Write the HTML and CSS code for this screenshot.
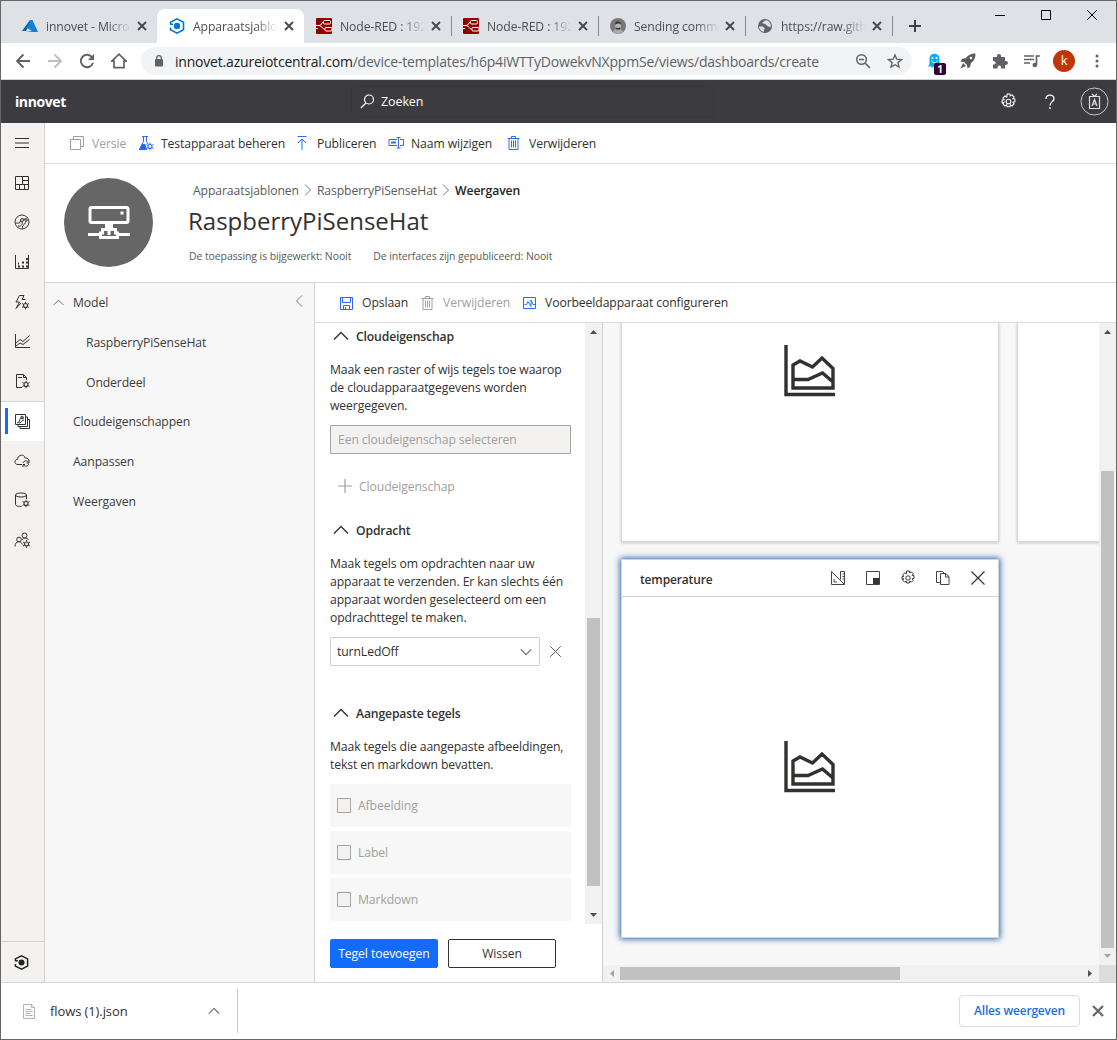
FILE: index.html
```html
<!DOCTYPE html>
<html lang="nl">
<head>
<meta charset="utf-8">
<title>Apparaatsjablonen</title>
<link rel="stylesheet" href="styles.css">
</head>
<body>
<svg class="defs" width="0" height="0">
  <symbol id="close" viewBox="0 0 16 16"><path d="M4 4l8 8M12 4l-8 8" stroke="currentColor" stroke-width="1.9" fill="none"/></symbol>
  <symbol id="thin-x" viewBox="0 0 16 16"><path d="M1.5 1.5l13 13M14.500 1.500l-13 13" stroke="currentColor" stroke-width="1.200" fill="none"/></symbol>
  <symbol id="up" viewBox="0 0 16 16"><path d="M1 11.500l7-7 7 7" stroke="currentColor" stroke-width="1.400" fill="none"/></symbol>
  <symbol id="gear" viewBox="0 0 16 16"><g fill="none" stroke="currentColor"><circle cx="8" cy="8" r="2.200"/><path d="M6.700 1h2.600l.4 1.800 1.600-1 1.900 1.900-1 1.600 1.800.4v2.600l-1.800.4 1 1.600-1.900 1.900-1.600-1-.4 1.800H6.700l-.4-1.800-1.600 1-1.900-1.900 1-1.600L2 9.300V6.700l1.800-.4-1-1.600 1.900-1.900 1.600 1z"/></g></symbol>
  <symbol id="hub" viewBox="0 0 16 16"><path d="M1.500 6V4.200L8 .9l6.500 3.300v7.600L8 15.100l-6.500-3.300V9.500M1 6.200h3" fill="none" stroke="currentColor" stroke-width="1.600"/><circle cx="8" cy="8" r="3.200" fill="currentColor"/></symbol>
  <symbol id="nodered" viewBox="0 0 16 16"><rect width="16" height="16" rx="1" fill="#8f0000"/><g fill="none" stroke="#fff"><rect x="7.500" y="2.500" width="7" height="3.500" rx="1"/><rect x="9" y="9.500" width="7" height="3.500" rx="1"/><path d="M0 7.500h3c3 0 2-3.200 4.500-3.200M3 7.500c3 0 3 3.800 6 3.800M0 10.500h2"/></g></symbol>
  <symbol id="trash" viewBox="0 0 16 16"><path d="M1.500 3.500h12M5.500 3V1.500h4V3M3 3.500v11h9v-11M5.500 5.500v7M7.500 5.500v7M9.500 5.500v7" fill="none" stroke="currentColor"/></symbol>
  <symbol id="chart" viewBox="0 0 52 52"><path d="M2 0v49.500h49M9 20v23h40V23.500L38 13l-9.500 9L16 16zM9 34.500h15L38.500 28l10.500 9" fill="none" stroke="currentColor" stroke-width="3.400"/></symbol>
  <symbol id="sgear" viewBox="0 0 8 8"><circle cx="4" cy="4" r="2" fill="none" stroke="currentColor" stroke-width="1.100"/><path d="M4 0v1.500M4 6.500V8M.5 2l1.400.8M6.100 5.200l1.400.8M.5 6l1.400-.8M6.100 2.800L7.500 2" stroke="currentColor"/></symbol>
</svg>
<div class="window">
  <div class="tabs">
    <div class="tab"><svg class="fav" viewBox="0 0 16 16"><path d="M8 2L0 13h4L9 3z" fill="#0a5ea8"/><path d="M8.500 2L5 10l5 3-6 1h12L10.500 2z" fill="#1480d8"/></svg><span class="title">innovet - Microsoft</span><svg class="x"><use href="#close"/></svg></div>
    <div class="tab active"><svg class="fav blue"><use href="#hub"/></svg><span class="title">Apparaatsjablonen</span><svg class="x"><use href="#close"/></svg></div>
    <div class="tab"><svg class="fav"><use href="#nodered"/></svg><span class="title">Node-RED : 192.168</span><svg class="x"><use href="#close"/></svg></div>
    <div class="tab sep"><svg class="fav"><use href="#nodered"/></svg><span class="title">Node-RED : 192.168</span><svg class="x"><use href="#close"/></svg></div>
    <div class="tab sep"><svg class="fav" viewBox="0 0 16 16"><circle cx="8" cy="8" r="8" fill="#777"/><path d="M3 14c0-4 10-4 10 0a8 8 0 0 1-10 0z" fill="#aaa"/><ellipse cx="8" cy="7.500" rx="3" ry="4" fill="#b5b5b5"/><path d="M5 7c-.5-5 6.500-5 6 0-1-2-4-2-6 0zM5.500 9c1 1.500 4 1.500 5 0l-.8 2.500H6.300z" fill="#333"/></svg><span class="title">Sending commands</span><svg class="x"><use href="#close"/></svg></div>
    <div class="tab sep"><svg class="fav" viewBox="0 0 16 16"><circle cx="8" cy="8" r="7" fill="#5f6368"/><path d="M2 8.500h4l2 2-1 1v2.200C4 13.500 2 11 2 8.500zM8 2.500c-1 1.500-3 1-2.500 3 2-.5 4 1 5.500 3 1 .5 2 .2 3 0C14 5 12 2.500 9 2.200z" fill="#dee1e6"/></svg><span class="title">https://raw.githubuser</span><svg class="x"><use href="#close"/></svg></div>
    <div class="newtab"><svg width="14" height="14" viewBox="0 0 14 14"><path d="M7 1v12M1 7h12" stroke="#3c4043" stroke-width="2"/></svg></div>
    <div class="controls">
      <svg width="12" height="12" viewBox="0 0 12 12"><path d="M1 6.500h10" stroke="#000"/></svg>
      <svg width="12" height="12" viewBox="0 0 12 12"><path d="M1.500 1.500h9v9h-9z" stroke="#000" fill="none"/></svg>
      <svg width="12" height="12" viewBox="0 0 12 12"><path d="M1 1l10 10M11 1L1 11" stroke="#000"/></svg>
    </div>
  </div>

  <div class="toolbar">
    <svg class="tb" viewBox="0 0 16 16"><path d="M15 8H2M8.500 1.500L2 8l6.500 6.500" stroke="#5f6368" stroke-width="1.900" fill="none"/></svg>
    <svg class="tb" viewBox="0 0 16 16"><path d="M1 8h13M7.500 1.500L14 8l-6.500 6.500" stroke="#bcbec1" stroke-width="1.900" fill="none"/></svg>
    <svg class="tb" viewBox="0 0 16 16"><path d="M13.200 4.500A6.200 6.200 0 1 0 14 9.800" stroke="#5f6368" stroke-width="1.900" fill="none"/><path d="M15 1v6H9z" fill="#5f6368"/></svg>
    <svg class="tb" viewBox="0 0 16 16"><path d="M.8 8.200L8 1.200l7.200 7H13v6.500H3V8.200z" stroke="#5f6368" stroke-width="1.700" fill="none"/></svg>
    <div class="omnibox">
      <svg class="lock" width="10" height="12" viewBox="0 0 10 12"><rect x="1" y="4" width="8" height="7.500" rx="1" fill="#5f6368"/><path d="M2.700 5V3a2.300 2.300 0 0 1 4.600 0v2" stroke="#5f6368" stroke-width="1.300" fill="none"/></svg>
      <div class="url"><span class="host">innovet.azureiotcentral.com</span>/device-templates/h6p4iWTTyDowekvNXppmSe/views/dashboards/create</div>
      <svg width="16" height="16" viewBox="0 0 16 16"><path d="M10 10l5 5M4 6.500h5" stroke="#5f6368" stroke-width="1.600"/><circle cx="6.500" cy="6.500" r="4.800" fill="none" stroke="#5f6368" stroke-width="1.500"/></svg>
      <svg width="16" height="16" viewBox="0 0 16 16"><path d="M8 2l1.800 4.200 4.600.4-3.500 3 1.100 4.500L8 11.700l-4 2.400 1.100-4.500-3.500-3 4.600-.4z" fill="none" stroke="#5f6368" stroke-width="1.400"/></svg>
    </div>
    <div class="ext ghost"><svg width="16" height="16" viewBox="0 0 16 16"><path d="M2 14l1.500-3V6c0-7 10-7 10 0v5l1 3-3-1-1.500 2-2-2-2 2-1-2z" fill="#00aef0"/><circle cx="6.500" cy="5" r="1.100" fill="#fff"/><circle cx="10.500" cy="5" r="1.100" fill="#fff"/><path d="M5.500 7.500c1 3 5 3 6 0" stroke="#fff" fill="none"/></svg><b>1</b></div>
    <svg class="ext" viewBox="0 0 16 16"><path d="M15.500.5C11 .5 8 2 6 5L2 6 .5 8.500 4 9l3 3 .5 3.500L10 14l1-4c3-2 4.500-5 4.500-9.500zM3 10L.5 15.500 6 13z" fill="#5a5a5a"/><circle cx="11" cy="5" r="1.300" fill="#fff"/></svg>
    <svg class="ext" viewBox="0 0 16 16"><path d="M1 4h4c-1-4 5-4 4 0h4v4c4-1 4 4.500 0 4v3.500H9c1-4-4-4-3.500 0H1v-4c3.500.5 3.500-4 0-3.500z" fill="#5f6368"/></svg>
    <svg class="ext" viewBox="0 0 16 16"><path d="M0 3h10M0 6.500h10M0 10h6M12.500 12V3H16" stroke="#5f6368" stroke-width="1.700" fill="none"/><circle cx="10.800" cy="12" r="2.300" fill="#5f6368"/></svg>
    <div class="avatar">k</div>
    <svg class="ext" viewBox="0 0 16 16"><g fill="#5f6368"><circle cx="8" cy="3" r="1.500"/><circle cx="8" cy="8" r="1.500"/><circle cx="8" cy="13" r="1.500"/></g></svg>
  </div>

  <header class="appbar">
    <div class="brand">innovet</div>
    <div class="search"><svg width="15" height="15" viewBox="0 0 15 15"><circle cx="9" cy="5.500" r="4.500" fill="none" stroke="#fff" stroke-width="1.200"/><path d="M6 9L.8 14" stroke="#fff" stroke-width="1.200"/></svg>Zoeken</div>
    <svg class="agear" width="17" height="17"><use href="#gear"/></svg>
    <svg class="help" width="12" height="16" viewBox="0 0 12 16"><path d="M2 5c0-5 8-5 8-.5C10 8 6 7.500 6 11.500M6 13v2" fill="none" stroke="#fff" stroke-width="1.300"/></svg>
    <svg width="29" height="29" viewBox="0 0 29 29"><circle cx="14.500" cy="14.500" r="13.500" fill="none" stroke="#c8c8c8"/><path d="M9.500 9.500h10v12h-10zM12 7l2.500 2.500L17 7M12 19l2.500-6.500L17 19M13 17h3" fill="none" stroke="#e0e0e0" stroke-width="1.200"/></svg>
  </header>

  <div class="app">
    <nav class="rail">
      <div class="ri"><svg viewBox="0 0 16 16"><path d="M1 3.500h14M1 8h14M1 12.500h14"/></svg></div>
      <div class="ri"><svg viewBox="0 0 16 16"><path d="M1.500 1.500h13v13h-13zM8.500 1.500v8M1.500 9.500h13M5.500 9.500v5M8.500 5.500h6M10.500 9.500v5"/></svg></div>
      <div class="ri"><svg viewBox="0 0 16 16"><circle cx="8" cy="8" r="7"/><circle cx="8" cy="6" r="1.500"/><circle cx="12" cy="6" r="1.200"/><path d="M1.500 9c4 0 4 1 4-1l1.500-1M8.500 14.500C8 10 11 12 11.500 7.500M9.500 5h2M4 12c3 1 5-2 4-4"/></svg></div>
      <div class="ri"><svg viewBox="0 0 16 16"><path d="M1.500 1v13.500h13V1"/><path d="M4 12.500h2M8 12.500h2M12 12.500h2M8 8.500h2M12 8.500h2M4 9.500h1M12 5h2" stroke-width="1.800"/></svg></div>
      <div class="ri"><svg viewBox="0 0 16 16"><path d="M10 1.500H5.500L2 8h3.500L2 14.500 7 9M10 1.500L8 5.500h3.500"/><use href="#sgear" x="7.500" y="7.500" width="8" height="8"/></svg></div>
      <div class="ri"><svg viewBox="0 0 16 16"><path d="M1.500 1v13.500H16M2 10l4-3.500 3 2 6.500-6M2 13l4-3 3 1.500 6.500-5"/></svg></div>
      <div class="ri"><svg viewBox="0 0 16 16"><path d="M8 14.500H2.500v-13h7l3 3V7M9.500 1.500v3h3M4 4.500h4" /><use href="#sgear" x="8" y="7.500" width="8" height="8"/></svg></div>
      <div class="ri sel"><svg viewBox="0 0 16 16"><path d="M1.500 1.500h10v10h-10zM4 12v1.500h9.500V4H12M6 14v1.500h9.500V6.500H14M3 10c3 0 2-4 4-5h3M5 10c3 0 2-3 5-3" /><circle cx="8" cy="4.500" r="1.300"/></svg></div>
      <div class="ri"><svg viewBox="0 0 16 16"><path d="M8 12.500H4C0 12.500 0 7.500 3.500 7.500 4 2 10.500 2 11 6c2.500-.5 4 1.500 4 3"/><path d="M9 11c.5-2.500 4.500-3 5.500-.5M15 8.500v2.500h-2.500M14.800 12c-.5 2.500-4.300 3-5.500.5M9 15v-2.500h2"/></svg></div>
      <div class="ri"><svg viewBox="0 0 16 16"><ellipse cx="7" cy="3" rx="5.500" ry="2"/><path d="M1.500 3v9.500c0 1.500 3 2 6 2M12.500 3v4"/><use href="#sgear" x="8" y="7.500" width="8" height="8"/></svg></div>
      <div class="ri"><svg viewBox="0 0 16 16"><circle cx="10.500" cy="3.500" r="2.500"/><circle cx="5" cy="7.500" r="2.300"/><path d="M1 14.500c0-6 6-6 7.500-2M8 8c2-3 5.500-2 6.500 0"/><use href="#sgear" x="8.500" y="8" width="8" height="8"/></svg></div>
      <div class="ri last"><svg class="hubicon"><use href="#hub"/></svg></div>
    </nav>

    <main class="main">
      <div class="cmds">
        <div class="cmd off w1"><svg viewBox="0 0 16 16"><path d="M1.500 4.500h10v10h-10zM4.500 4V1.500h10v10H12"/></svg>Versie</div>
        <div class="cmd w2"><svg viewBox="0 0 16 16"><path d="M4 1.500h6M5.500 1.500v5L1.500 14.500h7M8.500 1.500v5L10 9"/><path d="M4 9.500L1.500 14.500h7L7 9.500z" fill="#136bfb"/><use href="#sgear" x="8" y="7.500" width="8" height="8"/></svg>Testapparaat beheren</div>
        <div class="cmd w3"><svg viewBox="0 0 16 16"><path d="M3.500 1.500h9M8 15V4M4 8l4-4 4 4"/></svg>Publiceren</div>
        <div class="cmd w4"><svg viewBox="0 0 16 16"><path d="M9 4.500H1v6h8M12 4.500h3.500v6H12M3 7.500h5M8.500 2.500h4M10.500 2.500v10.500M8.500 13h4"/><path d="M3 7.500h5" stroke-width="2"/></svg>Naam wijzigen</div>
        <div class="cmd"><svg><use href="#trash"/></svg>Verwijderen</div>
      </div>

      <div class="hero">
        <div class="circle"><svg width="42" height="36" viewBox="0 0 42 36"><g fill="none" stroke="#fff" stroke-width="3"><rect x="2" y="2.500" width="38" height="15" rx="1.500"/><path d="M0 29.500h12M30 29.500h12"/><path d="M18.500 19v5.500h-4v3.500h-2v4.500h17V28h-2v-3.500h-4V19M21 19v11"/></g><rect x="32.500" y="6.500" width="3" height="3" fill="#fff"/></svg></div>
        <div class="heroText">
          <div class="crumbs"><span>Apparaatsjablonen</span><svg viewBox="0 0 8 12"><path d="M1 .5L6.500 6 1 11.500"/></svg><span class="c2">RaspberryPiSenseHat</span><svg viewBox="0 0 8 12"><path d="M1 .5L6.500 6 1 11.500"/></svg><b>Weergaven</b></div>
          <h1>RaspberryPiSenseHat</h1>
          <div class="meta"><span>De toepassing is bijgewerkt: Nooit</span><span>De interfaces zijn gepubliceerd: Nooit</span></div>
        </div>
      </div>

      <div class="work">
        <aside class="tree">
          <div class="ti root"><svg width="11" height="11"><use href="#up"/></svg><span>Model</span><svg class="collapse" width="8" height="12" viewBox="0 0 8 12"><path d="M7 .5L1.500 6 7 11.500" fill="none" stroke="#777"/></svg></div>
          <div class="ti sub">RaspberryPiSenseHat</div>
          <div class="ti sub">Onderdeel</div>
          <div class="ti">Cloudeigenschappen</div>
          <div class="ti">Aanpassen</div>
          <div class="ti">Weergaven</div>
        </aside>
        <section class="editor">
          <div class="cmds small">
            <div class="cmd w5"><svg viewBox="0 0 16 16"><path d="M1.500 2.500h12v12h-12zM3.500 2.500v5h8v-5M4.500 14.500v-4h6v4M6.500 12v2"/></svg>Opslaan</div>
            <div class="cmd off w6"><svg><use href="#trash"/></svg>Verwijderen</div>
            <div class="cmd w7"><svg viewBox="0 0 16 16"><path d="M1.500 2.500h12v11h-12zM2.500 9.500h2l1.500-3 3 5V5l2 4.500h2"/></svg>Voorbeeldapparaat configureren</div>
          </div>
          <div class="split">
            <div class="panel">
              <div class="scroll">
                <div class="form">
                  <h2><svg><use href="#up"/></svg>Cloudeigenschap</h2>
                  <p>Maak een raster of wijs tegels toe waarop<br>de cloudapparaatgegevens worden<br>weergegeven.</p>
                  <div class="input">Een cloudeigenschap selecteren</div>
                  <div class="add"><svg width="14" height="14" viewBox="0 0 14 14"><path d="M7 0v14M0 7h14" stroke="#a19f9d" stroke-width="1.200"/></svg>Cloudeigenschap</div>
                  <h2 class="h2b"><svg><use href="#up"/></svg>Opdracht</h2>
                  <p>Maak tegels om opdrachten naar uw<br>apparaat te verzenden. Er kan slechts één<br>apparaat worden geselecteerd om een<br>opdrachttegel te maken.</p>
                  <div class="selrow"><div class="select">turnLedOff<svg width="12" height="12"><use href="#up"/></svg></div><svg class="clear" width="13" height="13"><use href="#thin-x"/></svg></div>
                  <h2 class="h2c"><svg><use href="#up"/></svg>Aangepaste tegels</h2>
                  <p>Maak tegels die aangepaste afbeeldingen,<br>tekst en markdown bevatten.</p>
                  <div class="checks">
                    <div class="check"><i></i>Afbeelding</div>
                    <div class="check"><i></i>Label</div>
                    <div class="check"><i></i>Markdown</div>
                  </div>
                </div>
                <div class="vbar left"><svg viewBox="0 0 7 4"><path d="M0 4h7L3.500 0z"/></svg><div class="thumb"></div><svg viewBox="0 0 7 4"><path d="M0 0h7L3.500 4z"/></svg></div>
              </div>
              <div class="buttons"><div class="btn primary">Tegel toevoegen</div><div class="btn">Wissen</div></div>
            </div>
            <div class="canvasArea">
              <div class="canvas">
                <div class="tile"><div class="th"></div><div class="tbody"><svg><use href="#chart"/></svg></div></div>
                <div class="tile"></div>
                <div class="tile glow"><div class="th"><b>temperature</b>
                  <svg viewBox="0 0 16 16"><path d="M1.500 1.500v13h13zM4 9v3h3M10.500 1.500h4v13M10.500 1.500v8M12.500 4h2M12.500 6.500h2M12.500 9h2"/></svg>
                  <svg viewBox="0 0 16 16"><path d="M1.500 1.500h13v13h-13z"/><path d="M8 8h6v6H8z" fill="#333" stroke="none"/></svg>
                  <svg><use href="#gear"/></svg>
                  <svg viewBox="0 0 16 16"><path d="M5 12.500H1.500v-11h6L10 4M5.500 3.500h5l3.500 3v8H5.500zM10.500 3.500v3.500H14"/></svg>
                  <svg><use href="#thin-x"/></svg></div>
                  <div class="tbody"><svg><use href="#chart"/></svg></div></div>
              </div>
              <div class="vbar right"><svg viewBox="0 0 7 4"><path d="M0 4h7L3.500 0z"/></svg><div class="thumb"></div><svg class="dim" viewBox="0 0 7 4"><path d="M0 0h7L3.500 4z"/></svg></div>
              <div class="hbar"><svg class="dim" viewBox="0 0 4 7"><path d="M4 0v7L0 3.500z"/></svg><div class="thumb"></div><svg viewBox="0 0 4 7"><path d="M0 0v7l4-3.500z"/></svg></div>
              <div class="corner"></div>
            </div>
          </div>
        </section>
      </div>
    </main>
  </div>

  <footer class="downloads">
    <div class="file"><svg width="12" height="15" viewBox="0 0 12 15"><path d="M.5.500h8l3 3v11H.5zM8.500.5v3h3M2.500 5.500h6M2.500 7.500h7M2.500 9.500h5M2.500 11.500h7" fill="#fafafa" stroke="#b4b4b4"/></svg><span>flows (1).json</span><svg width="12" height="12"><use class="thick" href="#up"/></svg></div>
    <div class="all">Alles weergeven</div>
    <svg class="dx" width="20" height="20"><use href="#close"/></svg>
  </footer>
</div>
</body>
</html>
```
FILE: styles.css
```css
* { box-sizing: border-box; }
body { margin: 0; font-family: "Open Sans", "Noto Sans", sans-serif; font-size: 12.2px; color: #323130; letter-spacing: -0.1px; }
svg { flex: none; display: block; }
.defs { position: absolute; }
.window { width: 1117px; height: 1040px; border: 1px solid #666; display: flex; flex-direction: column; background: #fff; overflow: hidden; white-space: nowrap; }

/* browser tabs */
.tabs { height: 42px; flex: none; background: #dee1e6; display: flex; padding: 8px 0 0 9px; }
.tab { width: 147px; height: 34px; display: flex; align-items: center; padding-left: 12px; color: #4b4e52; flex: none; }
.tab.active { background: #fff; border-radius: 8px 8px 0 0; }
.tab.sep { background: linear-gradient(#85888d, #85888d) left center / 1px 20px no-repeat; }
.fav { width: 16px; height: 16px; margin-right: 8px; }
.blue { color: #0078d4; }
.title { width: 85px; overflow: hidden; mask-image: linear-gradient(90deg, #000 72%, transparent); }
.x { width: 16px; height: 16px; margin-left: 3px; color: #45484c; }
.newtab { width: 46px; border-left: 0; display: flex; align-items: center; padding-left: 16px; background: linear-gradient(#85888d, #85888d) left center / 1px 20px no-repeat; }
.controls { display: flex; gap: 34px; padding: 0 0 0 56px; }

/* browser toolbar */
.toolbar { height: 37px; flex: none; border-bottom: 1px solid #d0d2d4; display: flex; align-items: center; padding-left: 14px; }
.tb { width: 16px; height: 16px; margin-right: 16px; }
.omnibox { width: 771px; height: 28px; margin-left: -2px; border-radius: 14px; background: #f1f3f4; display: flex; align-items: center; padding-left: 13px; gap: 16px; }
.lock { margin-right: -5px; }
.url { width: 664px; font-size: 14px; color: #5f6368; letter-spacing: -0.2px; }
.host { color: #202124; }
.ext { width: 16px; height: 16px; margin-left: 16px; }
.ghost { display: flex; margin-left: 14px; width: 18px; position: relative; }
.ghost b { position: absolute; left: 8px; top: 10px; width: 12px; height: 12px; border-radius: 2px; background: #33003c; color: #fff; font-size: 10px; line-height: 12px; text-align: center; }
.avatar { width: 22px; height: 22px; margin: 0 8px 0 13px; border-radius: 50%; background: #c1350b; color: #fff; text-align: center; line-height: 21px; font-size: 13px; }
.avatar + .ext { margin-left: 6px; }

/* application bar */
.appbar { height: 43px; flex: none; background: #3c3b40; color: #fff; display: flex; align-items: center; padding-left: 14px; }
.brand { width: 337px; font-size: 14px; font-weight: 700; letter-spacing: -0.4px; }
.search { width: 361px; height: 29px; display: flex; align-items: center; gap: 6px; padding-left: 8px; border-radius: 3px; font-size: 12.500px; box-shadow: 0 0 2px rgba(0,0,0,.2); }
.agear { margin-left: 287px; }
.help { margin: 0 24px 0 27px; }

.app { flex: 1; min-height: 0; display: flex; }
.rail { width: 44px; background: #f3f2f1; border-right: 1px solid #d2d0ce; display: flex; flex-direction: column; }
.ri { height: 39.700px; display: flex; align-items: center; padding-left: 13px; flex: none; }
.ri svg { width: 16px; height: 16px; fill: none; stroke: #323130; }
.ri .hubicon { stroke: none; width: 15px; height: 15px; color: #222; }
.ri.sel { background: #fff; border-top: 1px solid #d8d6d4; padding-left: 4px; }
.ri.sel::before { content: ""; width: 3px; height: 26px; background: #136bfb; margin-right: 6px; }
.ri.last { margin-top: auto; height: 41px; border-top: 1px solid #d2d0ce; }
.main { flex: 1; min-width: 0; display: flex; flex-direction: column; }
.cmds { height: 41px; flex: none; border-bottom: 1px solid #dcdcdc; display: flex; align-items: center; padding-left: 24px; }
.cmd { display: flex; align-items: center; gap: 7px; }
.cmd svg { width: 16px; height: 16px; fill: none; stroke: #2a6af5; color: #2a6af5; }
.cmd.off { color: #a19f9d; }
.cmd.off svg { stroke: #a19f9d; color: #a19f9d; }
.w1 { width: 69px; }
.w2 { width: 156px; }
.w3 { width: 94px; }
.w4 { width: 118px; }

.hero { height: 119px; flex: none; border-bottom: 1px solid #d6d6d6; display: flex; padding-left: 19px; }
.circle { width: 89px; height: 89px; margin-top: 14px; border-radius: 50%; background: #666; display: flex; align-items: center; justify-content: center; }
.heroText { padding: 16px 0 0 36px; }
.crumbs { height: 20px; display: flex; align-items: center; padding-left: 4px; color: #5c5a58; }
.crumbs svg { width: 8px; height: 12px; margin: 0 5px; fill: none; stroke: #777; }
.crumbs b { font-weight: 600; color: #252423; }
h1 { margin: 4px 0 0 -1px; font-size: 24px; line-height: 34px; font-weight: 400; letter-spacing: 0; }
.meta { display: flex; gap: 22px; margin-top: 9px; font-size: 10.500px; line-height: 18px; color: #5c5a58; }

.work { flex: 1; min-height: 0; display: flex; }
.tree { width: 270px; flex: none; background: #f7f7f7; border-right: 1px solid #d6d6d6; }
.ti { height: 39.700px; display: flex; align-items: center; padding-left: 28px; color: #3d3b3a; }
.ti.sub { padding-left: 41px; }
.ti.root { padding-left: 8px; gap: 9px; }
.ti.root svg { color: #666; }
.collapse { margin: 0 11px 3px auto; }
.editor { flex: 1; min-width: 0; display: flex; flex-direction: column; }
.cmds.small { height: 40px; }
.w5 { width: 81px; }
.w6 { width: 102px; }
.split { flex: 1; min-height: 0; display: flex; }
.panel { width: 288px; flex: none; border-right: 1px solid #d0d0d0; }
.scroll { height: 601px; display: flex; overflow: hidden; }
.form { width: 270px; padding: 0 14px 0 15px; }
h2 { margin: 0; height: 26px; display: flex; align-items: center; gap: 7px; padding-left: 3px; font-size: 12.200px; font-weight: 600; letter-spacing: -0.15px; }
h2 svg { width: 16px; height: 16px; }
p { margin: 12px 0 10px; line-height: 18px; }
.input { height: 29px; border: 1px solid #a6a4a2; border-radius: 1px; background: #f3f2f1; color: #a19f9d; padding-left: 7px; line-height: 28px; }
.add { height: 26px; margin-top: 19px; padding-left: 8px; display: flex; gap: 7px; align-items: center; color: #a19f9d; }
.h2b { margin-top: 18px; }
.h2c { margin-top: 34px; }
.selrow { display: flex; align-items: center; }
.select { width: 210px; height: 29px; border: 1px solid #d2d0ce; border-radius: 1px; display: flex; align-items: center; justify-content: space-between; padding: 0 7px 0 6px; }
.select svg { transform: scaleY(-1); color: #605e5c; }
.clear { margin-left: 9px; color: #555; }
.checks { display: grid; gap: 4px; }
.check { height: 43px; background: #f7f7f7; color: #a19f9d; display: flex; align-items: center; padding-left: 7px; gap: 7px; }
.check i { width: 14px; height: 15px; border: 1px solid #a6a4a2; border-radius: 1px; background: #f3f2f1; }
.buttons { display: flex; gap: 10px; padding: 15px 0 0 15px; }
.btn { width: 108px; height: 29px; border: 1px solid #323130; border-radius: 2px; text-align: center; line-height: 28px; }
.btn.primary { border-color: #136bfb; background: #136bfb; color: #fff; }

.vbar { width: 17px; background: #f1f1f1; display: flex; flex-direction: column; align-items: center; padding: 7px 0; }
.vbar svg { width: 7px; height: 4px; fill: #505050; }
.vbar .thumb { width: 13px; background: #c1c1c1; }
.vbar svg.dim, .hbar svg.dim { fill: #a3a3a3; }
.vbar svg:last-child { margin-top: auto; }
.left .thumb { height: 268px; margin-top: 284px; }
.right .thumb { height: 477px; margin-top: 137px; }
.canvasArea { flex: 1; min-width: 0; display: grid; grid-template: 642px 17px / 496px 17px; }
.canvas { overflow: hidden; background: #f7f7f7; display: grid; grid-template-columns: 378px 378px; grid-template-rows: 379px 379px; gap: 17px 18px; align-content: end; padding: 0 0 27px 18px; }
.tile { background: #fff; border: 1px solid #d8d8d8; box-shadow: 0 1px 3px rgba(0,0,0,.2); display: flex; flex-direction: column; }
.tile.glow { border-color: #d0d4da; box-shadow: 0 0 6px 1px #2466b0; }
.th { height: 37px; flex: none; border-bottom: 1px solid #d0d0d0; display: flex; align-items: center; gap: 19px; padding: 0 12px 0 18px; }
.th b { font-weight: 600; font-size: 12px; letter-spacing: -.15px; margin-right: auto; padding-top: 3px; }
.th svg { width: 16px; height: 16px; fill: none; stroke: #444; color: #333; }
.tbody { flex: 1; display: flex; align-items: center; justify-content: center; }
.tbody svg { width: 52px; height: 52px; color: #323130; }
.hbar { background: #f1f1f1; display: flex; align-items: center; padding: 0 7px; }
.hbar svg { width: 4px; height: 7px; fill: #505050; }
.hbar .thumb { width: 280px; height: 13px; margin: 0 auto 0 6px; background: #c1c1c1; }
.corner { background: #dcdcdc; }

/* downloads */
.downloads { height: 57px; flex: none; border-top: 1px solid #d6d6d6; display: flex; align-items: center; }
.file { width: 237px; height: 44px; border-right: 1px solid #c8c8c8; display: flex; align-items: center; padding: 0 17px 0 22px; font-size: 13px; }
.file span { margin: 0 auto 0 15px; }
.file svg:last-child { color: #5f6368; }
.all { width: 121px; height: 32px; margin-left: 721px; border: 1px solid #dadce0; border-radius: 4px; color: #1a6fe8; text-align: center; line-height: 30px; font-weight: 600; font-size: 12px; letter-spacing: -.2px; }
.dx { margin-left: 8px; color: #666a6e; }
```
